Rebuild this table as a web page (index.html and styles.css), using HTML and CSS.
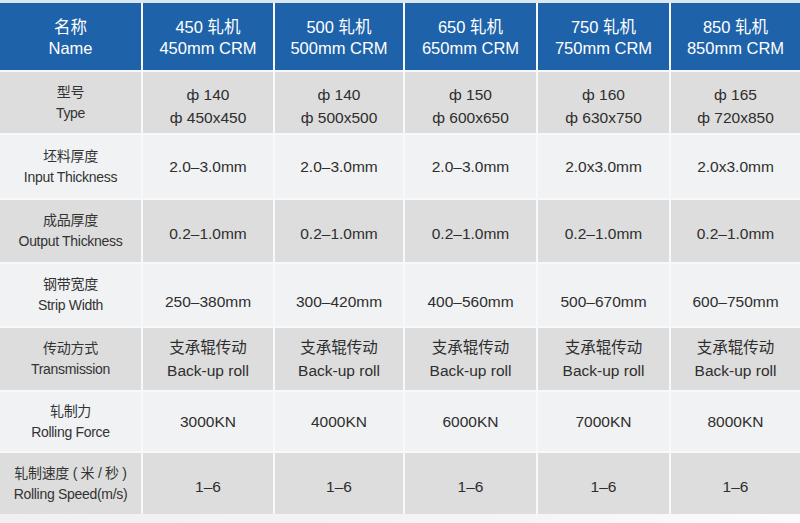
FILE: index.html
```html
<!DOCTYPE html>
<html lang="zh">
<head>
<meta charset="utf-8">
<title>轧机参数</title>
<link rel="stylesheet" href="styles.css">
</head>
<body>
<div class="sheet">
  <div class="grid">
    <div class="cell head">名称<br>Name</div>
    <div class="cell head">450 轧机<br>450mm CRM</div>
    <div class="cell head">500 轧机<br>500mm CRM</div>
    <div class="cell head">650 轧机<br>650mm CRM</div>
    <div class="cell head">750 轧机<br>750mm CRM</div>
    <div class="cell head">850 轧机<br>850mm CRM</div>

    <div class="cell label dark">型号<br>Type</div>
    <div class="cell val dark two shift">ф 140<br>ф 450x450</div>
    <div class="cell val dark two shift">ф 140<br>ф 500x500</div>
    <div class="cell val dark two shift">ф 150<br>ф 600x650</div>
    <div class="cell val dark two shift">ф 160<br>ф 630x750</div>
    <div class="cell val dark two shift">ф 165<br>ф 720x850</div>

    <div class="cell label light">坯料厚度<br>Input Thickness</div>
    <div class="cell val light">2.0–3.0mm</div>
    <div class="cell val light">2.0–3.0mm</div>
    <div class="cell val light">2.0–3.0mm</div>
    <div class="cell val light">2.0x3.0mm</div>
    <div class="cell val light">2.0x3.0mm</div>

    <div class="cell label dark">成品厚度<br>Output Thickness</div>
    <div class="cell val dark shift">0.2–1.0mm</div>
    <div class="cell val dark shift">0.2–1.0mm</div>
    <div class="cell val dark shift">0.2–1.0mm</div>
    <div class="cell val dark shift">0.2–1.0mm</div>
    <div class="cell val dark shift">0.2–1.0mm</div>

    <div class="cell label light">钢带宽度<br>Strip Width</div>
    <div class="cell val light low">250–380mm</div>
    <div class="cell val light low">300–420mm</div>
    <div class="cell val light low">400–560mm</div>
    <div class="cell val light low">500–670mm</div>
    <div class="cell val light low">600–750mm</div>

    <div class="cell label dark">传动方式<br>Transmission</div>
    <div class="cell val dark two">支承辊传动<br>Back-up roll</div>
    <div class="cell val dark two">支承辊传动<br>Back-up roll</div>
    <div class="cell val dark two">支承辊传动<br>Back-up roll</div>
    <div class="cell val dark two">支承辊传动<br>Back-up roll</div>
    <div class="cell val dark two">支承辊传动<br>Back-up roll</div>

    <div class="cell label light">轧制力<br>Rolling Force</div>
    <div class="cell val light">3000KN</div>
    <div class="cell val light">4000KN</div>
    <div class="cell val light">6000KN</div>
    <div class="cell val light">7000KN</div>
    <div class="cell val light">8000KN</div>

    <div class="cell label dark">轧制速度 ( 米 / 秒 )<br>Rolling Speed(m/s)</div>
    <div class="cell val dark shift">1–6</div>
    <div class="cell val dark shift">1–6</div>
    <div class="cell val dark shift">1–6</div>
    <div class="cell val dark shift">1–6</div>
    <div class="cell val dark shift">1–6</div>
  </div>
  <div class="foot"></div>
</div>
</body>
</html>
```

FILE: styles.css
```css
html, body {
  margin: 0;
  padding: 0;
  background: #ffffff;
}

body {
  width: 800px;
  height: 523px;
  overflow: hidden;
  font-family: "Liberation Sans", "Noto Sans CJK SC", Arial, sans-serif;
  color: #2e2e2e;
}

.sheet {
  padding-top: 3px;
  background: linear-gradient(#dbe6f0 0, #dbe6f0 3px, #ffffff 3px);
}

.grid {
  display: grid;
  grid-template-columns: 141px 130px 128px 131px 131px 1fr;
  grid-template-rows: 67px 61px 63px 62px 62px 62px 59px 61px;
  column-gap: 2px;
  row-gap: 2px;
  background: #f7f8f9;
}

.cell {
  display: flex;
  align-items: center;
  justify-content: center;
  text-align: center;
  box-sizing: border-box;
}

.head {
  background: #1e62aa;
  color: #ffffff;
  font-size: 16.5px;
  line-height: 21px;
  padding-top: 2px;
}

.label {
  font-size: 14px;
  line-height: 21px;
  letter-spacing: -0.3px;
  color: #333333;
}

.val {
  font-size: 15.5px;
  line-height: 22px;
  color: #2e2e2e;
}

.val.two {
  line-height: 23px;
}

.shift {
  padding-top: 6px;
}

.low {
  padding-top: 14px;
}

.dark {
  background: #dddddd;
}

.light {
  background: #f1f2f3;
}

.foot {
  height: 9px;
  background: linear-gradient(90deg, #f0f0f0 0%, #f4f4f4 60%, #fbfbfb 100%);
}
```
